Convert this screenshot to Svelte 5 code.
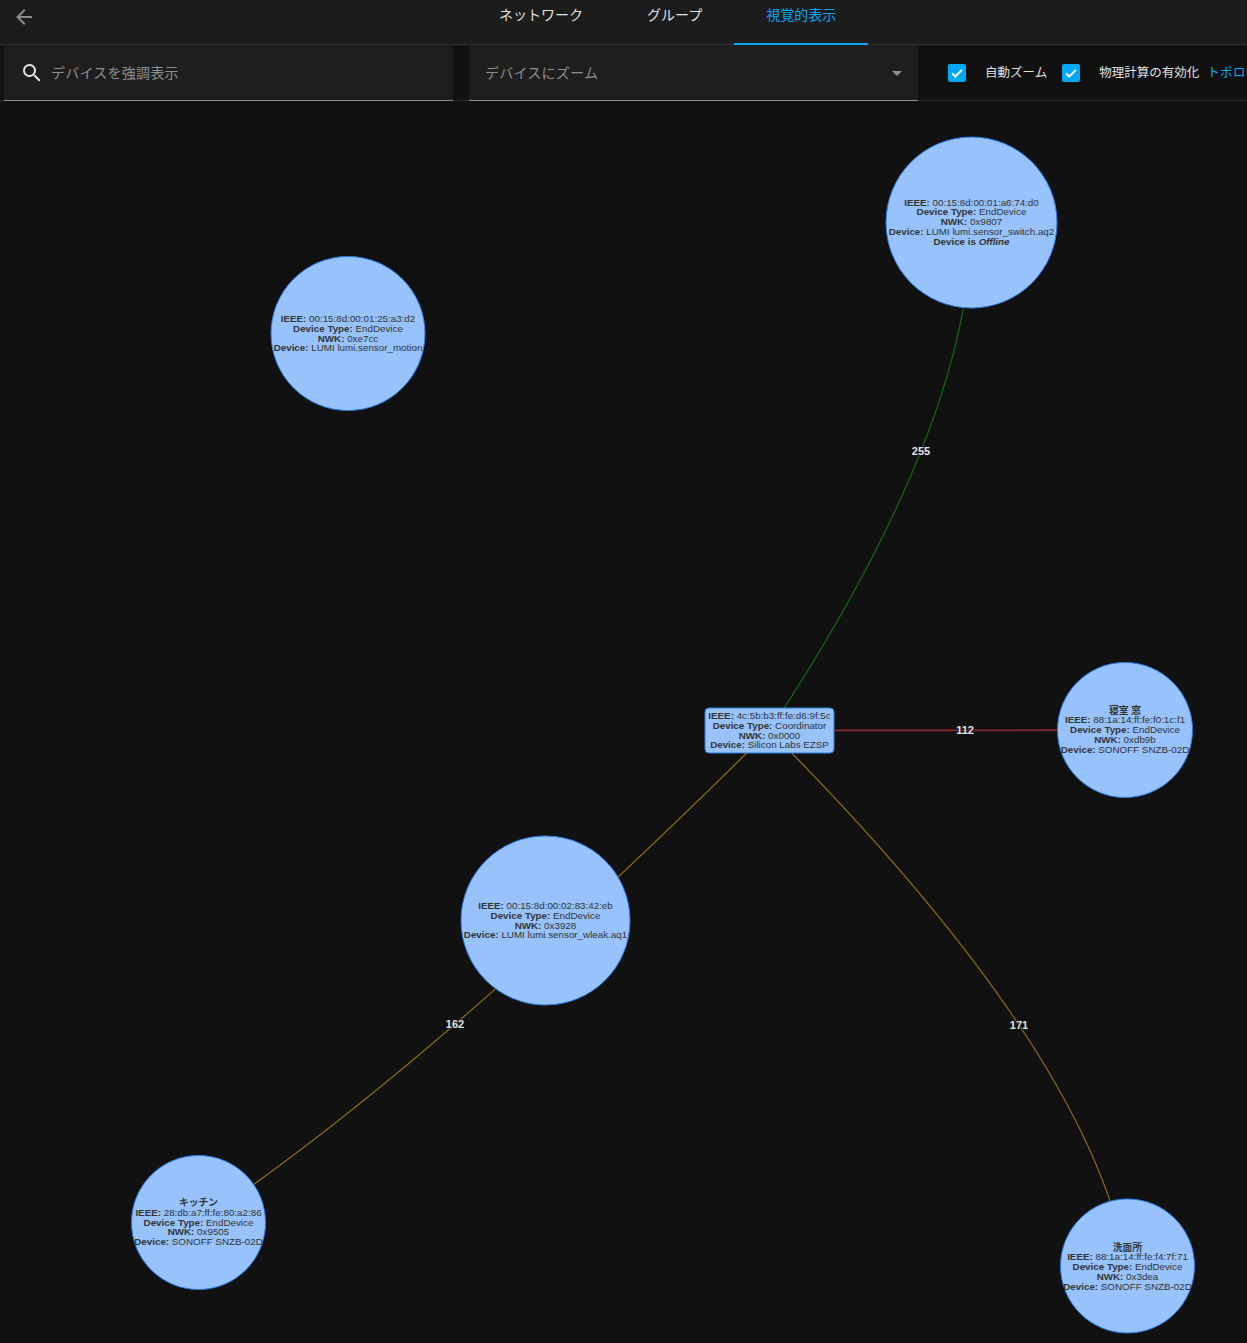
<script lang="ts">
	const tabs = [
		{ label: "ネットワーク", active: false },
		{ label: "グループ", active: false },
		{ label: "視覚的表示", active: true },
	];

	const edges = [
		{ d: "M769.5 730.5 Q971.5 425.5 971.5 222.5", color: "#0f6a0f", width: 1.2, label: "255", x: 921, y: 451 },
		{ d: "M769.5 730.5 L1125 730", color: "#7c2626", width: 2, label: "112", x: 965, y: 730 },
		{ d: "M769.5 730.5 Q426 1072 198.5 1222.5", color: "#8f7012", width: 1.2, label: "162", x: 455, y: 1024 },
		{ d: "M769.5 730.5 Q1090 1052 1127 1266", color: "#8f7012", width: 1.2, label: "171", x: 1019, y: 1025 },
	];

	const device = (bold: string, value: string) => ({ bold, value });

	const nodes = [
		{
			x: 971.5, y: 222.5, r: 85.5, top: 201.5,
			lines: [
				device("IEEE:", "00:15:8d:00:01:a6:74:d0"),
				device("Device Type:", "EndDevice"),
				device("NWK:", "0x9807"),
				device("Device:", "LUMI lumi.sensor_switch.aq2"),
				{ bold: "Device is", value: "Offline", italic: true },
			],
		},
		{
			x: 348, y: 333.5, r: 77, top: 318,
			lines: [
				device("IEEE:", "00:15:8d:00:01:25:a3:d2"),
				device("Device Type:", "EndDevice"),
				device("NWK:", "0xe7cc"),
				device("Device:", "LUMI lumi.sensor_motion"),
			],
		},
		{
			x: 1125, y: 730, r: 67.5, top: 709.5,
			lines: [
				device("寝室 窓", ""),
				device("IEEE:", "88:1a:14:ff:fe:f0:1c:f1"),
				device("Device Type:", "EndDevice"),
				device("NWK:", "0xdb9b"),
				device("Device:", "SONOFF SNZB-02D"),
			],
		},
		{
			x: 545.5, y: 920.5, r: 84.5, top: 905,
			lines: [
				device("IEEE:", "00:15:8d:00:02:83:42:eb"),
				device("Device Type:", "EndDevice"),
				device("NWK:", "0x3928"),
				device("Device:", "LUMI lumi.sensor_wleak.aq1"),
			],
		},
		{
			x: 198.5, y: 1222.5, r: 67, top: 1202,
			lines: [
				device("キッチン", ""),
				device("IEEE:", "28:db:a7:ff:fe:80:a2:86"),
				device("Device Type:", "EndDevice"),
				device("NWK:", "0x9505"),
				device("Device:", "SONOFF SNZB-02D"),
			],
		},
		{
			x: 1127.5, y: 1266, r: 67, top: 1246.5,
			lines: [
				device("洗面所", ""),
				device("IEEE:", "88:1a:14:ff:fe:f4:7f:71"),
				device("Device Type:", "EndDevice"),
				device("NWK:", "0x3dea"),
				device("Device:", "SONOFF SNZB-02D"),
			],
		},
	];

	const coordinator = [
		device("IEEE:", "4c:5b:b3:ff:fe:d6:9f:5c"),
		device("Device Type:", "Coordinator"),
		device("NWK:", "0x0000"),
		device("Device:", "Silicon Labs EZSP"),
	];

	const lineHeight = 9.8;
</script>

{#snippet label(lines, cx, top)}
	<text class="node-text">{#each lines as line, i}<tspan x={cx} y={top + i * lineHeight} class="bold">{line.bold}</tspan>{#if line.value}<tspan class={line.italic ? "bold italic" : ""}>{" " + line.value}</tspan>{/if}{/each}</text>
{/snippet}

<div class="page">
	<header class="header">
		<button class="back" aria-label="戻る">
			<svg viewBox="0 0 24 24" width="24" height="24">
				<path d="M20 11v2H8l5.500 5.500-1.420 1.420L4.160 12l7.920-7.920L13.500 5.500 8 11h12z" />
			</svg>
		</button>
		<nav class="tabs">
			{#each tabs as tab}
				<div class="tab" class:active={tab.active}>{tab.label}</div>
			{/each}
		</nav>
	</header>

	<div class="toolbar">
		<div class="field search">
			<svg viewBox="0 0 24 24" width="24" height="24">
				<path d="M9.500 3a6.500 6.500 0 0 1 4.940 10.730l.27.270h.79l5 5-1.500 1.500-5-5v-.79l-.27-.27A6.500 6.500 0 1 1 9.500 3m0 2a4.500 4.500 0 1 0 0 9 4.500 4.500 0 0 0 0-9z" />
			</svg>
			<span class="field-text">デバイスを強調表示</span>
		</div>
		<div class="field select">
			<span class="field-text">デバイスにズーム</span>
			<i class="caret"></i>
		</div>
		<div class="options">
			<span class="check">
				<svg viewBox="0 0 24 24" width="18" height="18">
					<path d="M5.500 12.500l4.200 4.200L18.500 7.800" />
				</svg>
			</span>
			<span class="option-label zoom">自動ズーム</span>
			<span class="check">
				<svg viewBox="0 0 24 24" width="18" height="18">
					<path d="M5.500 12.500l4.200 4.200L18.500 7.800" />
				</svg>
			</span>
			<span class="option-label physics">物理計算の有効化</span>
			<span class="link">トポロジーを更新</span>
		</div>
	</div>

	<svg class="graph" viewBox="0 101 1247 1242" width="1247" height="1242">
		{#each edges as edge}
			<path d={edge.d} fill="none" stroke={edge.color} stroke-width={edge.width} />
		{/each}

		{#each nodes as node}
			<circle class="node" cx={node.x} cy={node.y} r={node.r} />
			{@render label(node.lines, node.x, node.top)}
		{/each}

		<rect class="node" x="705" y="708" width="129" height="45" rx="4" />
		{@render label(coordinator, 769.5, 715)}

		{#each edges as edge}
			<text class="edge-text" x={edge.x} y={edge.y}>{edge.label}</text>
		{/each}
	</svg>
</div>

<style>
	:global(body) {
		background: #111111;
	}

	.page {
		width: 1247px;
		height: 1343px;
		overflow: hidden;
		display: flex;
		flex-direction: column;
		background: #111111;
		font-family: "Noto Sans CJK JP", "Noto Sans", sans-serif;
	}

	.header {
		display: flex;
		flex: none;
		height: 45px;
		box-sizing: border-box;
		background: #1c1c1c;
		border-bottom: 1px solid #333333;
	}

	.back {
		flex: none;
		width: 48px;
		height: 34px;
		padding: 0;
		border: none;
		background: none;
		display: flex;
		align-items: center;
		justify-content: center;
	}

	.back svg {
		fill: #8c8c8c;
	}

	.tabs {
		display: flex;
		margin-left: 419px;
	}

	.tab {
		padding: 4px 32px 0;
		height: 45px;
		box-sizing: border-box;
		font-size: 14px;
		line-height: 20px;
		color: #e1e1e1;
		white-space: nowrap;
	}

	.tab.active {
		color: #03a9f4;
		border-bottom: 2px solid #03a9f4;
	}

	.toolbar {
		display: flex;
		flex: none;
		height: 56px;
		box-sizing: border-box;
		padding-left: 4px;
		border-bottom: 1px solid #2a2a2a;
		white-space: nowrap;
	}

	.field {
		display: flex;
		align-items: center;
		flex: none;
		width: 449px;
		height: 56px;
		box-sizing: border-box;
		background: #1e1e1e;
		border-bottom: 1px solid #8e8e8e;
		border-radius: 4px 4px 0 0;
		font-size: 14px;
		color: #8f8f8f;
	}

	.field-text {
		padding-bottom: 2px;
		letter-spacing: 0.25px;
	}

	.search {
		gap: 7px;
		padding: 0 16px;
	}

	.search svg {
		fill: #e1e1e1;
	}

	.select {
		justify-content: space-between;
		margin-left: 16px;
		padding: 0 16px;
	}

	.caret {
		width: 0;
		height: 0;
		border-left: 5px solid transparent;
		border-right: 5px solid transparent;
		border-top: 5px solid #8f8f8f;
		margin-top: 2px;
	}

	.options {
		display: flex;
		align-items: center;
		padding-left: 30px;
		font-size: 12.500px;
		color: #e1e1e1;
	}

	.check {
		flex: none;
		display: flex;
		width: 18px;
		height: 18px;
		border-radius: 2px;
		background: #03a9f4;
	}

	.check path {
		fill: none;
		stroke: #ffffff;
		stroke-width: 2.600;
	}

	.option-label,
	.link {
		padding-bottom: 2px;
	}

	.option-label.zoom {
		margin: 0 15px 0 19px;
	}

	.option-label.physics {
		margin: 0 8px 0 19px;
	}

	.link {
		color: #03a9f4;
		letter-spacing: 0.4px;
	}

	.graph {
		display: block;
		flex: none;
	}

	.node {
		fill: #97c2fc;
		stroke: #2b7ce9;
		stroke-width: 1;
	}

	.node-text {
		font-family: "Liberation Sans", "Noto Sans CJK JP", sans-serif;
		font-size: 9.800px;
		fill: #343434;
		text-anchor: middle;
		dominant-baseline: central;
	}

	.bold {
		font-weight: 700;
	}

	.italic {
		font-style: italic;
	}

	.edge-text {
		font-family: "Liberation Sans", sans-serif;
		font-size: 11px;
		font-weight: 700;
		fill: #e4e4e4;
		stroke: #111111;
		stroke-width: 1.500;
		paint-order: stroke;
		text-anchor: middle;
		dominant-baseline: central;
	}
</style>
